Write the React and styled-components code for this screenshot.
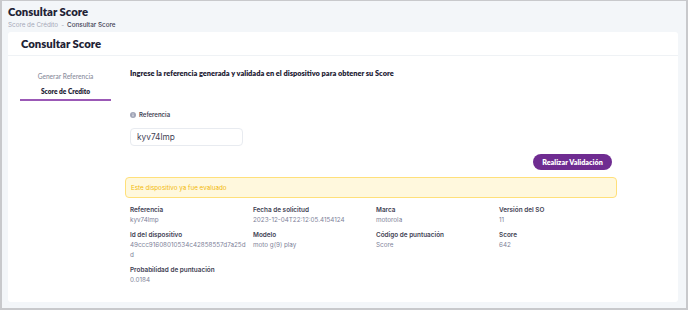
import React from 'react'
import styled, { createGlobalStyle } from 'styled-components'

const GlobalStyle = createGlobalStyle`
    html, body {
        margin: 0;
        padding: 0;
        background: #ffffff;
    }
    * {
        box-sizing: border-box;
    }
`

const Frame = styled.div`
    width: 688px;
    height: 310px;
    border: 2px solid #c8c9cc;
    border-top-width: 1px;
    background: #f3f6f9;
    font-family: Inter, 'Noto Sans', sans-serif;
    overflow: hidden;
    padding: 0 8px 0 5px;
`

const PageHead = styled.div`
    height: 31px;
    padding-top: 4px;
    padding-left: 1px;
`

const PageTitle = styled.h1`
    margin: 0;
    font-family: Lato, Inter, sans-serif;
    font-size: 11.3px;
    font-weight: 800;
    color: #1e2235;
    line-height: 14px;
`

const Crumbs = styled.div`
    font-size: 6.3px;
    color: #a5a8b8;
    margin-top: 1px;
    line-height: 10px;

    span {
        margin: 0 3px;
    }

    b {
        color: #3f4254;
        font-weight: 500;
    }
`

const Card = styled.div`
    background: #ffffff;
    border-radius: 3px;
    height: 270px;
    margin-left: 1px;
`

const CardHead = styled.div`
    height: 24px;
    border-bottom: 1px solid #eff2f5;
    padding-left: 13px;
    display: flex;
    align-items: center;
`

const CardTitle = styled.h2`
    margin: 0;
    font-family: Lato, Inter, sans-serif;
    font-size: 11.3px;
    font-weight: 800;
    color: #1e2235;
`

const CardBody = styled.div`
    display: flex;
    padding: 12px 0 0 12px;
`

const Tabs = styled.div`
    width: 91px;
    flex-shrink: 0;
    padding-top: 1px;
    display: flex;
    flex-direction: column;
    align-items: stretch;
`

const Tab = styled.div`
    text-align: center;
    font-family: Lato, Inter, sans-serif;
    font-size: 6.6px;
    line-height: 10px;
    padding: 2px 0 3px;
    color: ${(p) => (p.active ? '#1e2235' : '#8a8d9c')};
    font-weight: ${(p) => (p.active ? 800 : 500)};
    border-bottom: ${(p) => (p.active ? '2px solid #9b59b6' : 'none')};
`

const Main = styled.div`
    flex: 1;
    min-width: 0;
    padding-left: 19px;
    padding-right: 66px;
`

const Intro = styled.p`
    margin: 0;
    font-family: Lato, Inter, sans-serif;
    font-size: 7.4px;
    font-weight: 800;
    color: #1e2235;
    line-height: 12px;
`

const FieldLabel = styled.label`
    display: flex;
    align-items: center;
    gap: 3px;
    margin-top: 30px;
    font-size: 6px;
    font-weight: 600;
    color: #3f4254;
    line-height: 9px;
`

const Input = styled.div`
    margin-top: 9px;
    width: 113px;
    height: 18px;
    border: 1px solid #e8ebf0;
    border-radius: 4px;
    padding-left: 6px;
    display: flex;
    align-items: center;
    font-size: 8.3px;
    color: #3f4254;
`

const Actions = styled.div`
    display: flex;
    justify-content: flex-end;
    margin-top: 8px;
`

const Button = styled.button`
    border: 0;
    background: #6f2c91;
    color: #ffffff;
    font-family: Lato, Inter, sans-serif;
    font-size: 7.2px;
    font-weight: 800;
    height: 16px;
    padding: 0;
    border-radius: 9px;
    width: 79px;
`

const Alert = styled.div`
    margin: 7px -5px 0 -5px;
    height: 21px;
    border: 1px solid #ffe07a;
    background: #fff8dd;
    border-radius: 4px;
    padding-left: 5px;
    display: flex;
    align-items: center;
    font-size: 6.3px;
    color: #f2b80a;
`

const Details = styled.div`
    display: grid;
    grid-template-columns: repeat(4, 123px);
    row-gap: 5px;
    margin-top: 8px;
`

const Item = styled.div`
    padding-right: 5px;
`

const ItemLabel = styled.div`
    font-size: 6.4px;
    font-weight: 600;
    color: #3f4254;
    line-height: 9px;
`

const ItemValue = styled.div`
    font-size: 6.3px;
    color: #7e8299;
    line-height: 10.5px;
    word-break: break-all;
`

const InfoIcon = () => (
    <svg width="6" height="6" viewBox="0 0 12 12">
        <circle cx="6" cy="6" r="6" fill="#a1a5b7" />
        <rect x="5.2" y="5" width="1.6" height="4" fill="#fff" />
        <circle cx="6" cy="3.4" r="0.9" fill="#fff" />
    </svg>
)

const details = [
    ['Referencia', 'kyv74lmp'],
    ['Fecha de solicitud', '2023-12-04T22:12:05.4154124'],
    ['Marca', 'motorola'],
    ['Versión del SO', '11'],
    ['Id del dispositivo', '49ccc91608010534c42858557d7a25dd'],
    ['Modelo', 'moto g(9) play'],
    ['Código de puntuación', 'Score'],
    ['Score', '642'],
    ['Probabilidad de puntuación', '0.0184'],
]

export default function App() {
    return (
        <>
            <GlobalStyle />
            <Frame>
                <PageHead>
                    <PageTitle>Consultar Score</PageTitle>
                    <Crumbs>
                        Score de Crédito<span>-</span><b>Consultar Score</b>
                    </Crumbs>
                </PageHead>
                <Card>
                    <CardHead>
                        <CardTitle>Consultar Score</CardTitle>
                    </CardHead>
                    <CardBody>
                        <Tabs>
                            <Tab>Generar Referencia</Tab>
                            <Tab active>Score de Credito</Tab>
                        </Tabs>
                        <Main>
                            <Intro>
                                Ingrese la referencia generada y validada en el dispositivo para obtener su Score
                            </Intro>
                            <FieldLabel>
                                <InfoIcon />
                                Referencia
                            </FieldLabel>
                            <Input>kyv74lmp</Input>
                            <Actions>
                                <Button>Realizar Validación</Button>
                            </Actions>
                            <Alert>Este dispositivo ya fue evaluado</Alert>
                            <Details>
                                {details.map(([label, value]) => (
                                    <Item key={label}>
                                        <ItemLabel>{label}</ItemLabel>
                                        <ItemValue>{value}</ItemValue>
                                    </Item>
                                ))}
                            </Details>
                        </Main>
                    </CardBody>
                </Card>
            </Frame>
        </>
    )
}
